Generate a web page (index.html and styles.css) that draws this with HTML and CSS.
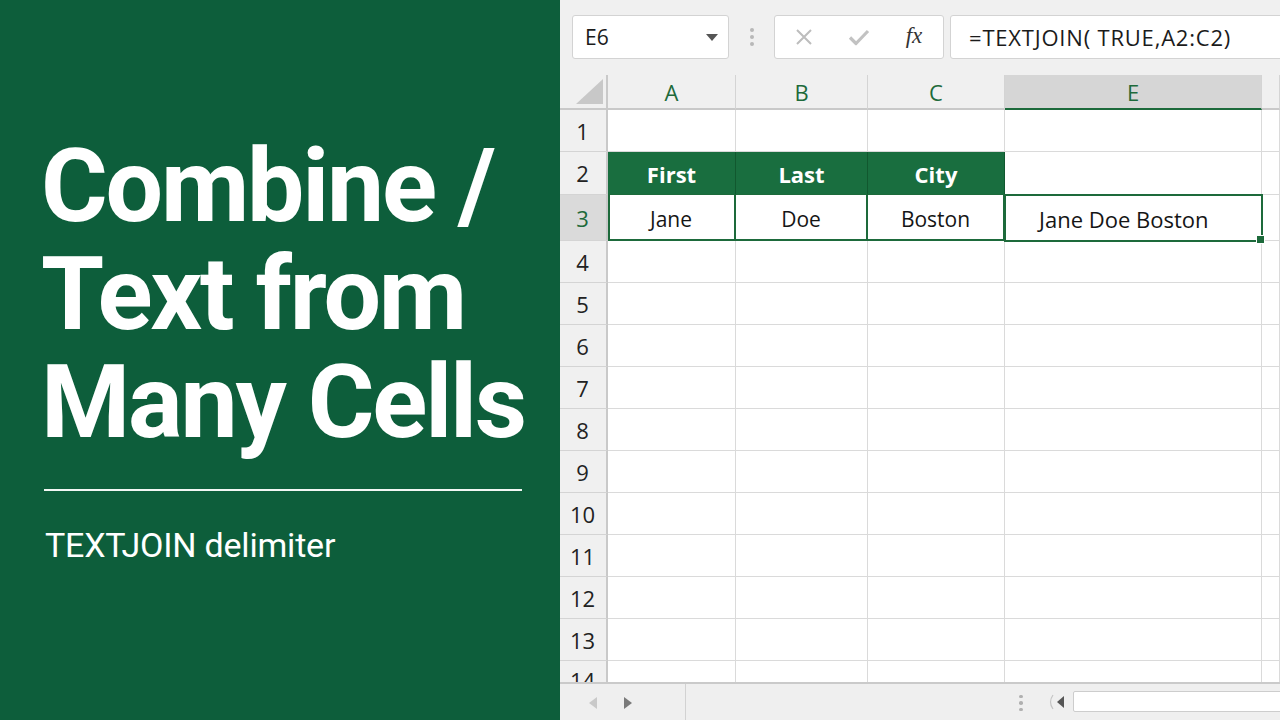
FILE: index.html
```html
<!DOCTYPE html>
<html lang="en">
<head>
<meta charset="utf-8">
<title>Combine Text from Many Cells</title>
<link rel="stylesheet" href="styles.css">
</head>
<body>
<div class="app">
  <section class="hero">
    <h1 class="title"><span class="title-line">Combine /</span><span class="title-line">Text from</span><span class="title-line">Many Cells</span></h1>
    <hr class="rule">
    <p class="subtitle">TEXTJOIN delimiter</p>
  </section>

  <section class="excel">
    <div class="toolbar">
      <div class="namebox">
        <span>E6</span>
        <svg class="caret" width="12" height="7" viewBox="0 0 12 7"><path d="M0 0H12L6 7Z" fill="#555"/></svg>
      </div>
      <div class="grip"><i></i><i></i><i></i></div>
      <div class="actions">
        <span class="act act-cancel">
          <svg width="18" height="18" viewBox="0 0 18 18"><path d="M2 2L16 16M16 2L2 16" stroke="#bdbdbd" stroke-width="2" fill="none"/></svg>
        </span>
        <span class="act act-ok">
          <svg width="22" height="17" viewBox="0 0 22 17"><path d="M2 8.5L8 14.5L20 2" stroke="#c2c2c2" stroke-width="3.2" fill="none" stroke-linejoin="round"/></svg>
        </span>
        <span class="act act-fx">fx</span>
      </div>
      <div class="formula">=TEXTJOIN( TRUE,A2:C2)</div>
    </div>

    <div class="sheet">
      <div class="corner"><span class="corner-tri"></span></div>
      <div class="colhead">A</div>
      <div class="colhead">B</div>
      <div class="colhead">C</div>
      <div class="colhead is-active">E</div>
      <div class="colhead"></div>

      <div class="rowhead">1</div>
      <div class="cell"></div><div class="cell"></div><div class="cell"></div><div class="cell"></div><div class="cell"></div>

      <div class="rowhead">2</div>
      <div class="cell head">First</div>
      <div class="cell head">Last</div>
      <div class="cell head">City</div>
      <div class="cell"></div><div class="cell"></div>

      <div class="rowhead is-active">3</div>
      <div class="cell rec rec-first">Jane</div>
      <div class="cell rec">Doe</div>
      <div class="cell rec">Boston</div>
      <div class="cell result">Jane Doe Boston</div>
      <div class="cell"></div>

      <div class="rowhead">4</div>
      <div class="cell"></div><div class="cell"></div><div class="cell"></div><div class="cell"></div><div class="cell"></div>
      <div class="rowhead">5</div>
      <div class="cell"></div><div class="cell"></div><div class="cell"></div><div class="cell"></div><div class="cell"></div>
      <div class="rowhead">6</div>
      <div class="cell"></div><div class="cell"></div><div class="cell"></div><div class="cell"></div><div class="cell"></div>
      <div class="rowhead">7</div>
      <div class="cell"></div><div class="cell"></div><div class="cell"></div><div class="cell"></div><div class="cell"></div>
      <div class="rowhead">8</div>
      <div class="cell"></div><div class="cell"></div><div class="cell"></div><div class="cell"></div><div class="cell"></div>
      <div class="rowhead">9</div>
      <div class="cell"></div><div class="cell"></div><div class="cell"></div><div class="cell"></div><div class="cell"></div>
      <div class="rowhead">10</div>
      <div class="cell"></div><div class="cell"></div><div class="cell"></div><div class="cell"></div><div class="cell"></div>
      <div class="rowhead">11</div>
      <div class="cell"></div><div class="cell"></div><div class="cell"></div><div class="cell"></div><div class="cell"></div>
      <div class="rowhead">12</div>
      <div class="cell"></div><div class="cell"></div><div class="cell"></div><div class="cell"></div><div class="cell"></div>
      <div class="rowhead">13</div>
      <div class="cell"></div><div class="cell"></div><div class="cell"></div><div class="cell"></div><div class="cell"></div>
      <div class="rowhead rowhead-cut">14</div>
      <div class="cell"></div><div class="cell"></div><div class="cell"></div><div class="cell"></div><div class="cell"></div>
    </div>

    <div class="statusbar">
      <div class="sheetnav">
        <svg width="8" height="12" viewBox="0 0 8 12"><path d="M8 0V12L0 6Z" fill="#c9c9c9"/></svg>
        <svg width="8" height="12" viewBox="0 0 8 12"><path d="M0 0V12L8 6Z" fill="#7a7a7a"/></svg>
      </div>
      <div class="spacer"></div>
      <div class="grip grip-small"><i></i><i></i><i></i></div>
      <div class="hscroll-btn">
        <svg width="8" height="16" viewBox="0 0 8 16"><path d="M6 1Q1 8 6 15" stroke="#c4c4c4" stroke-width="1.2" fill="none"/></svg>
        <svg width="7" height="12" viewBox="0 0 7 12"><path d="M7 0V12L0 6Z" fill="#555"/></svg>
      </div>
      <div class="hscroll-track"></div>
    </div>
  </section>
</div>
</body>
</html>
```

FILE: styles.css
```css
* { box-sizing: border-box; }

html, body {
  margin: 0;
  padding: 0;
  width: 1280px;
  height: 720px;
  overflow: hidden;
}

.app {
  display: flex;
  width: 1280px;
  height: 720px;
}

/* ---------- left title panel ---------- */
.hero {
  width: 560px;
  flex: none;
  background: #0d5e3b;
  color: #fff;
  padding: 132px 20px 0 41px;
  font-family: Roboto, "Liberation Sans", sans-serif;
}

.title {
  margin: 0;
  font-size: 102px;
  font-weight: 700;
  line-height: 108px;
  letter-spacing: -2.2px;
  white-space: nowrap;
}

.title-line {
  display: block;
  height: 108px;
}

.rule {
  width: 478px;
  margin: 33px 0 0 3px;
  border: 0;
  height: 2px;
  background: #f2f7f4;
}

.subtitle {
  margin: 35px 0 0 4px;
  font-size: 34px;
  font-weight: 400;
  line-height: 38px;
  letter-spacing: -0.2px;
}

/* ---------- spreadsheet panel ---------- */
.excel {
  flex: 1;
  display: flex;
  flex-direction: column;
  background: #f0f0f0;
  font-family: "Open Sans", "Noto Sans", sans-serif;
  color: #1b1b1b;
  overflow: hidden;
}

.toolbar {
  height: 75px;
  flex: none;
  display: flex;
  align-items: flex-start;
  padding: 15px 0 0 12px;
}

.namebox {
  width: 157px;
  height: 44px;
  background: #fff;
  border: 1px solid #d3d3d3;
  border-radius: 3px;
  display: flex;
  align-items: center;
  justify-content: space-between;
  padding: 0 10px 0 12px;
  font-size: 21px;
}

.grip {
  width: 45px;
  height: 44px;
  display: flex;
  flex-direction: column;
  align-items: center;
  justify-content: center;
  gap: 3px;
}

.grip i {
  display: block;
  width: 4px;
  height: 4px;
  border-radius: 50%;
  background: #b8b8b8;
}

.actions {
  width: 170px;
  height: 44px;
  background: #fff;
  border: 1px solid #d3d3d3;
  border-radius: 3px;
  display: flex;
  align-items: center;
}

.act {
  display: flex;
  align-items: center;
  justify-content: center;
  height: 100%;
}

.act-cancel { width: 58px; }
.act-ok { width: 52px; }
.act-fx {
  width: 58px;
  font-family: "Liberation Serif", "DejaVu Serif", serif;
  font-style: italic;
  font-size: 23px;
  color: #333;
  padding-bottom: 3px;
}

.formula {
  flex: 1;
  height: 44px;
  margin-left: 6px;
  margin-right: -6px;
  background: #fff;
  border: 1px solid #d3d3d3;
  border-radius: 3px;
  display: flex;
  align-items: center;
  padding-left: 18px;
  font-size: 22px;
  letter-spacing: 0.8px;
  white-space: nowrap;
}

/* ---------- grid ---------- */
.sheet {
  flex: 1;
  min-height: 0;
  overflow: hidden;
  display: grid;
  grid-template-columns: 48px 128px 132px 137px 257px 1fr;
  grid-template-rows: 35px 42px 43px 46px repeat(11, 42px);
  background: #fff;
}

.corner,
.colhead {
  background: #f0f0f0;
  border-bottom: 2px solid #c9c9c9;
  border-right: 1px solid #d4d4d4;
}

.corner {
  position: relative;
  border-right: 2px solid #c9c9c9;
}

.corner-tri {
  position: absolute;
  right: 3px;
  bottom: 4px;
  width: 27px;
  height: 25px;
  background: #c8c8c8;
  clip-path: polygon(100% 0, 100% 100%, 0 100%);
}

.colhead {
  display: flex;
  align-items: center;
  justify-content: center;
  color: #1d6a3b;
  font-size: 22px;
  padding-top: 1px;
}

.colhead.is-active {
  background: #d6d6d6;
  border-bottom: 2px solid #1d6a3b;
}

.rowhead {
  background: #f0f0f0;
  border-right: 2px solid #c9c9c9;
  border-bottom: 1px solid #d4d4d4;
  display: flex;
  align-items: center;
  justify-content: center;
  font-size: 22px;
  color: #222;
  padding-right: 1px;
}

.rowhead.is-active {
  background: #dadada;
  color: #1d6a3b;
}

.rowhead-cut {
  align-items: flex-start;
  padding-top: 4px;
}

.cell {
  border-right: 1px solid #dadada;
  border-bottom: 1px solid #dadada;
  display: flex;
  align-items: center;
  justify-content: center;
  font-size: 21px;
  color: #151515;
  white-space: nowrap;
}

.cell.head {
  background: #196e3f;
  color: #fff;
  font-weight: 700;
  font-size: 22px;
  border-right: 1px solid #11582f;
  border-bottom: 1px solid #1d6a3b;
  padding-top: 1px;
}

.cell.rec {
  border-right: 2px solid #1d6a3b;
  border-bottom: 2px solid #1d6a3b;
  padding-top: 3px;
}

.cell.rec-first {
  box-shadow: inset 2px 0 0 #1d6a3b;
}

.cell.result {
  position: relative;
  justify-content: flex-start;
  padding-left: 34px;
  padding-top: 2px;
  font-size: 22px;
  outline: 2px solid #1d6a3b;
  outline-offset: -1px;
  border-color: transparent;
}

/* fill handle on the active cell */
.cell.result::after {
  content: "";
  position: absolute;
  right: -4px;
  bottom: -4px;
  width: 7px;
  height: 7px;
  background: #1d6a3b;
  border: 1px solid #fff;
}

/* ---------- bottom bar ---------- */
.statusbar {
  height: 38px;
  flex: none;
  display: flex;
  align-items: stretch;
  background: #efefef;
  border-top: 2px solid #cacaca;
}

.sheetnav {
  width: 126px;
  border-right: 1px solid #d2d2d2;
  display: flex;
  align-items: center;
  gap: 27px;
  padding-left: 29px;
  padding-top: 2px;
}

.spacer { flex: 1; }

.grip-small {
  width: 20px;
  height: auto;
  gap: 3px;
  padding-top: 2px;
}

.grip-small i {
  width: 3.5px;
  height: 3.5px;
  background: #b0b0b0;
}

.hscroll-btn {
  width: 42px;
  display: flex;
  align-items: center;
  justify-content: center;
  gap: 2px;
  padding-left: 6px;
}

.hscroll-track {
  width: 215px;
  margin: 7px -8px 8px 0;
  background: #fff;
  border: 1px solid #cdcdcd;
  border-radius: 2px;
}
```
